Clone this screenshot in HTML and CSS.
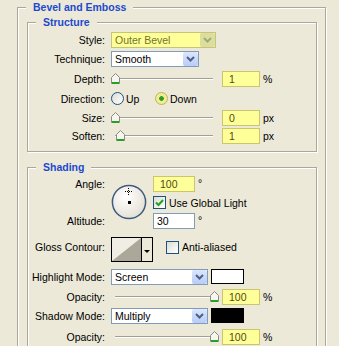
FILE: index.html
```html
<!DOCTYPE html>
<html lang="en">
<head>
<meta charset="utf-8">
<link rel="stylesheet" href="styles.css">
</head>
<body>
  <fieldset class="group outer">
    <legend>Bevel and Emboss</legend>

    <fieldset class="group inner">
      <legend>Structure</legend>
      <div class="form form-structure">
        <span class="lbl">Style:</span>
        <div class="ctl">
          <div class="select hl w-style">Outer Bevel
            <span class="btn"><svg width="9" height="6" viewBox="0 0 9 6"><path d="M1 1l3.5 3.5L8 1" fill="none" stroke="currentColor" stroke-width="2"/></svg></span>
          </div>
        </div>

        <span class="lbl">Technique:</span>
        <div class="ctl">
          <div class="select w-tech">Smooth
            <span class="btn"><svg width="9" height="6" viewBox="0 0 9 6"><path d="M1 1l3.5 3.5L8 1" fill="none" stroke="currentColor" stroke-width="2"/></svg></span>
          </div>
        </div>

        <span class="lbl">Depth:</span>
        <div class="ctl">
          <div class="slider">
            <svg class="thumb" style="left:0px" width="9" height="11" viewBox="0 0 9 11"><path d="M0.5 4.5L4.5 0.5L8.5 4.5V10.5H0.5Z" fill="#f6f5ef" stroke="#8d8b80"/><rect x="1" y="9" width="7" height="2" fill="#22a322"/></svg>
          </div>
          <span class="field hl">1</span>
          <span class="unit">%</span>
        </div>

        <span class="lbl">Direction:</span>
        <div class="ctl">
          <span class="choice"><span class="radio"></span>Up</span>
          <span class="choice"><span class="radio on"></span>Down</span>
        </div>

        <span class="lbl">Size:</span>
        <div class="ctl">
          <div class="slider">
            <svg class="thumb" style="left:0px" width="9" height="11" viewBox="0 0 9 11"><path d="M0.5 4.5L4.5 0.5L8.5 4.5V10.5H0.5Z" fill="#f6f5ef" stroke="#8d8b80"/><rect x="1" y="9" width="7" height="2" fill="#22a322"/></svg>
          </div>
          <span class="field hl">0</span>
          <span class="unit">px</span>
        </div>

        <span class="lbl">Soften:</span>
        <div class="ctl">
          <div class="slider">
            <svg class="thumb" style="left:5px" width="9" height="11" viewBox="0 0 9 11"><path d="M0.5 4.5L4.5 0.5L8.5 4.5V10.5H0.5Z" fill="#f6f5ef" stroke="#8d8b80"/><rect x="1" y="9" width="7" height="2" fill="#22a322"/></svg>
          </div>
          <span class="field hl">1</span>
          <span class="unit">px</span>
        </div>
      </div>
    </fieldset>

    <fieldset class="group inner shading">
      <legend>Shading</legend>
      <div class="form form-shading">
        <span class="lbl">Angle:</span>
        <svg class="dial" width="36" height="36" viewBox="0 0 36 36">
          <defs>
            <radialGradient id="dialfill" cx="40%" cy="35%" r="70%">
              <stop offset="0" stop-color="#ffffff"/>
              <stop offset="1" stop-color="#e2dfd2"/>
            </radialGradient>
          </defs>
          <circle cx="18" cy="18" r="16.6" fill="url(#dialfill)" stroke="#3f5b80" stroke-width="1.5"/>
          <path d="M14 7.5h7M17.5 4v7" stroke="#000" stroke-width="1" stroke-dasharray="1 1"/>
          <rect x="17" y="17" width="3" height="3" fill="#000"/>
        </svg>
        <div class="ctl c3">
          <span class="field hl w-angle">100</span>
          <span class="deg">°</span>
        </div>

        <div class="ctl c3">
          <span class="check"><svg width="9" height="9" viewBox="0 0 9 9"><path d="M1 4.5l2.5 2.5L8 2" fill="none" stroke="#21a121" stroke-width="2"/></svg></span>
          <span class="check-text">Use Global Light</span>
        </div>

        <span class="lbl">Altitude:</span>
        <div class="ctl c3">
          <span class="field w-angle">30</span>
          <span class="deg">°</span>
        </div>

        <span class="lbl">Gloss Contour:</span>
        <div class="ctl wide">
          <div class="contour">
            <svg width="29" height="23" viewBox="0 0 29 23"><polygon points="0,23 29,0 29,23" fill="#aca899"/></svg>
            <span class="contour-btn"><span class="tri"></span></span>
          </div>
          <span class="check aa"></span>
          <span class="check-text">Anti-aliased</span>
        </div>

        <span class="lbl">Highlight Mode:</span>
        <div class="ctl wide">
          <div class="select w-mode">Screen
            <span class="btn"><svg width="9" height="6" viewBox="0 0 9 6"><path d="M1 1l3.5 3.5L8 1" fill="none" stroke="currentColor" stroke-width="2"/></svg></span>
          </div>
          <span class="swatch white"></span>
        </div>

        <span class="lbl">Opacity:</span>
        <div class="ctl wide">
          <div class="slider">
            <svg class="thumb" style="left:99px" width="9" height="11" viewBox="0 0 9 11"><path d="M0.5 4.5L4.5 0.5L8.5 4.5V10.5H0.5Z" fill="#f6f5ef" stroke="#8d8b80"/><rect x="1" y="9" width="7" height="2" fill="#22a322"/></svg>
          </div>
          <span class="field hl">100</span>
          <span class="unit">%</span>
        </div>

        <span class="lbl">Shadow Mode:</span>
        <div class="ctl wide">
          <div class="select w-mode">Multiply
            <span class="btn"><svg width="9" height="6" viewBox="0 0 9 6"><path d="M1 1l3.5 3.5L8 1" fill="none" stroke="currentColor" stroke-width="2"/></svg></span>
          </div>
          <span class="swatch black"></span>
        </div>

        <span class="lbl">Opacity:</span>
        <div class="ctl wide">
          <div class="slider">
            <svg class="thumb" style="left:99px" width="9" height="11" viewBox="0 0 9 11"><path d="M0.5 4.5L4.5 0.5L8.5 4.5V10.5H0.5Z" fill="#f6f5ef" stroke="#8d8b80"/><rect x="1" y="9" width="7" height="2" fill="#22a322"/></svg>
          </div>
          <span class="field hl">100</span>
          <span class="unit">%</span>
        </div>
      </div>
    </fieldset>
  </fieldset>
</body>
</html>
```

FILE: styles.css
```css
*{
	margin: 0;
	padding: 0;
	box-sizing: border-box;
}
body{
	background: #ece9d8;
	font: 10.5px "Liberation Sans", Arial, sans-serif;
	color: #000;
	overflow: hidden;
}

/* etched group boxes */
.group{
	border: 1px solid #aca899;
	box-shadow: inset 1px 1px 0 #fff, 1px 1px 0 #fff;
	min-width: 0;
}
.group legend{
	margin-left: 8px;
	padding: 0 7px;
	line-height: 13px;
	font-weight: bold;
	color: #1c49cf;
	background: #ece9d8;
}
.outer{
	margin: 1px 13px 0 17px;
	padding: 2px 0 40px 0;
}
.inner{
	margin: 0 8px 0 9px;
	padding: 1px 0 6px 0;
}
.shading{
	margin-top: 9px;
	padding-bottom: 20px;
}

/* label / control grid */
.form{
	display: grid;
	grid-template-columns: 77px 1fr;
	column-gap: 6px;
	align-items: center;
}
.form-structure{
	grid-template-rows: 19px 20px 19px 21px 17px 19px;
}
.form-shading{
	grid-template-columns: 77px 36px 1fr;
	grid-template-rows: 18px 19px 17px 36px 23px 17px 21px 21px;
}
.form-shading .lbl{
	grid-column: 1;
}
.lbl{
	text-align: right;
	white-space: nowrap;
}
.ctl{
	display: flex;
	align-items: center;
	white-space: nowrap;
}
.c3{
	grid-column: 3;
}
.wide{
	grid-column: 2 / 4;
}
.dial{
	grid-column: 2;
	grid-row: 1 / 4;
}

/* combo boxes */
.select{
	display: flex;
	align-items: center;
	height: 16px;
	padding-left: 3px;
	border: 1px solid #7f9db9;
	background: #fff;
}
.select .btn{
	margin-left: auto;
	width: 15px;
	height: 14px;
	display: flex;
	align-items: center;
	justify-content: center;
	border-radius: 2px;
	background: linear-gradient(#dce6fd, #b8ccf8);
	color: #4d6185;
}
.select.hl{
	background: #ffff99;
	border-color: #c6c37b;
	color: #74742a;
}
.select.hl .btn{
	background: #deddA0;
	color: #9fac70;
}
.w-style{ width: 105px; }
.w-tech{ width: 88px; }
.w-mode{ width: 97px; }

/* text fields */
.field{
	display: block;
	width: 38px;
	height: 16px;
	line-height: 14px;
	padding-left: 3px;
	border: 1px solid #7f9db9;
	background: #fff;
}
.field.hl{
	padding-left: 6px;
	background: #ffff99;
	border-color: #c9c66c;
	color: #4e4e0c;
}
.field.w-angle{
	width: 42px;
}
.unit{
	margin-left: 3px;
}
.deg{
	margin-left: 3px;
	align-self: flex-start;
	margin-top: 1px;
}

/* sliders */
.slider{
	position: relative;
	width: 108px;
	height: 11px;
	margin-right: 3px;
}
.slider::before{
	content: "";
	position: absolute;
	left: 4px;
	right: 6px;
	top: 5px;
	border-top: 1px solid #a3a093;
	border-bottom: 1px solid #fff;
}
.thumb{
	position: absolute;
	top: 0;
}

/* radios and checkboxes */
.choice{
	display: flex;
	align-items: center;
	gap: 2px;
	width: 44px;
}
.radio{
	width: 13px;
	height: 13px;
	border-radius: 50%;
	border: 1px solid #1c5180;
	background: linear-gradient(135deg, #dcdcd4, #fff);
}
.radio.on{
	border-color: #bbb45a;
	background: radial-gradient(circle, #2a9c2a 0 2px, #f4ec93 2.6px);
}
.check{
	width: 13px;
	height: 13px;
	display: flex;
	align-items: center;
	justify-content: center;
	border: 1px solid #1c5180;
	background: linear-gradient(135deg, #dcdcd4, #fff);
}
.check-text{
	margin-left: 3px;
}
.check.aa{
	margin-left: 13px;
}

/* contour picker */
.contour{
	display: flex;
	width: 42px;
	height: 25px;
	align-self: flex-start;
	margin-top: 4px;
	border: 1px solid #000;
	background: #f0eee4;
}
.contour-btn{
	flex: 1;
	display: flex;
	justify-content: center;
	padding-top: 12px;
	border-left: 1px solid #000;
	background: #ece9d8;
}
.tri{
	width: 0;
	height: 0;
	border-left: 3px solid transparent;
	border-right: 3px solid transparent;
	border-top: 3px solid #000;
}

.swatch{
	width: 33px;
	height: 15px;
	margin-left: 3px;
	border: 1px solid #000;
}
.swatch.white{ background: #fff; }
.swatch.black{ background: #000; }
```
